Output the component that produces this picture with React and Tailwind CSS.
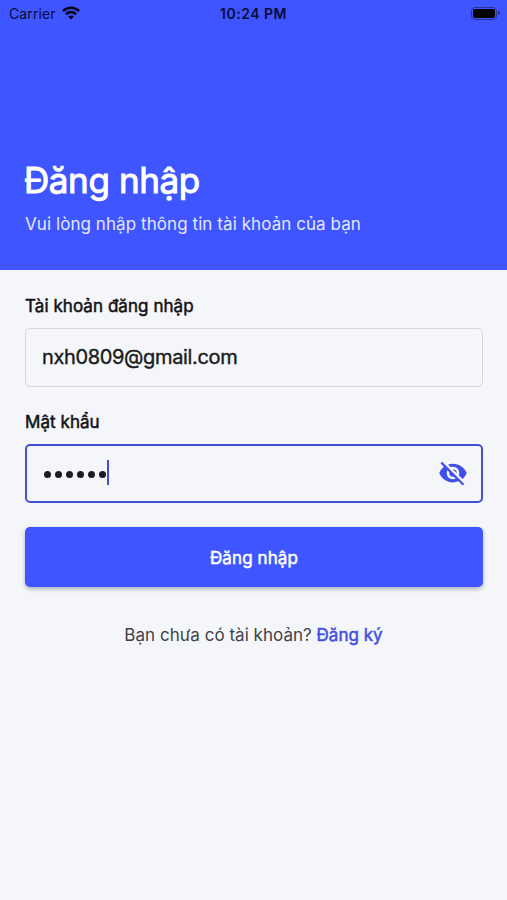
import { MdVisibilityOff } from "react-icons/md";

function StatusBar() {
  return (
    <div className="grid h-[27px] grid-cols-3 items-center text-[#080c38]">
      <div className="flex items-center gap-[6px] pl-[9px]">
        <span className="text-[14px] leading-none tracking-[0.1px]">Carrier</span>
        <svg className="-mt-[2px]" width="18" height="14" viewBox="0 0 18 14" fill="none" stroke="#03051c" strokeWidth="2.7">
          <path d="M1 5.1C5.5.6 12.5.6 17 5.1" />
          <path d="M4 8.3c2.8-2.8 7.2-2.8 10 0" />
          <path d="M9 13.5 6.2 10.7c1.6-1.5 4-1.5 5.6 0Z" fill="#03051c" stroke="none" />
        </svg>
      </div>
      <span className="text-center text-[14px] leading-none font-semibold tracking-[0.5px]">10:24 PM</span>
      <div className="flex items-center justify-end pr-[7px] pb-px">
        <div className="h-[13px] w-[26px] rounded-[4px] border border-[#2830a0] p-[1px]">
          <div className="h-full rounded-[2px] bg-black" />
        </div>
        <div className="ml-px h-[4px] w-[2px] rounded-r-full bg-[#2830a0]" />
      </div>
    </div>
  );
}

function Label({ children }) {
  return (
    <div className="h-[22px] text-[17px] leading-[22px] tracking-[0.06px] text-[#111214] [-webkit-text-stroke:0.5px]">{children}</div>
  );
}

export default function App() {
  return (
    <div className="h-[900px] w-[507px] overflow-hidden bg-[#f4f6f9] font-['Inter',sans-serif]">
      <header className="h-[270px] bg-[#3f55ff]">
        <StatusBar />
        <div className="px-[25px] pt-[130px] text-white">
          <h1 className="-ml-px h-[46px] text-[35px] leading-[46px] tracking-[-0.4px] [-webkit-text-stroke:1px]">
            Đăng nhập
          </h1>
          <p className="mt-[10px] text-[17px] leading-[22px] tracking-[0.07px] text-[#e4e8ff]">Vui lòng nhập thông tin tài khoản của bạn</p>
        </div>
      </header>

      <main className="px-[25px] pt-[25px]">
        <Label>Tài khoản đăng nhập</Label>
        <div className="mt-[11px] flex h-[59px] w-[458px] items-center rounded-[5px] border border-[#d5d7dc] pb-px pl-[16px] text-[20px] tracking-[-0.35px] text-[#1b1c20] [-webkit-text-stroke:0.4px]">
          nxh0809@gmail.com
        </div>

        <div className="mt-[24px]">
          <Label>Mật khẩu</Label>
        </div>
        <div className="mt-[11px] flex h-[59px] w-[458px] items-center justify-between rounded-[5px] border-[2px] border-[#434fd0] pr-[13px] pb-[2px] pl-[17px]">
          <div className="flex items-center">
            <div className="flex gap-[4px] pt-[3px]">
              {[0, 1, 2, 3, 4, 5].map((dot) => (
                <span key={dot} className="size-[7px] rounded-full bg-[#1b1c20]" />
              ))}
            </div>
            <span className="ml-px h-[25px] w-[2px] bg-[#434fd0]" />
          </div>
          <MdVisibilityOff className="size-[30px] text-[#3f50e8]" />
        </div>

        <button className="mt-[24px] flex h-[60px] w-[458px] items-center justify-center rounded-[5px] bg-[#3f55ff] pt-[3px] text-[17px] tracking-[0.1px] text-white shadow-[0_2px_4px_rgba(40,40,70,0.35)] [-webkit-text-stroke:0.5px]">
          Đăng nhập
        </button>

        <p className="mt-[37px] text-center text-[17px] leading-[22px] tracking-[0.02px] text-[#3f4146]">
          Bạn chưa có tài khoản? <span className="text-[#4350e0] [-webkit-text-stroke:0.5px]">Đăng ký</span>
        </p>
      </main>
    </div>
  );
}
